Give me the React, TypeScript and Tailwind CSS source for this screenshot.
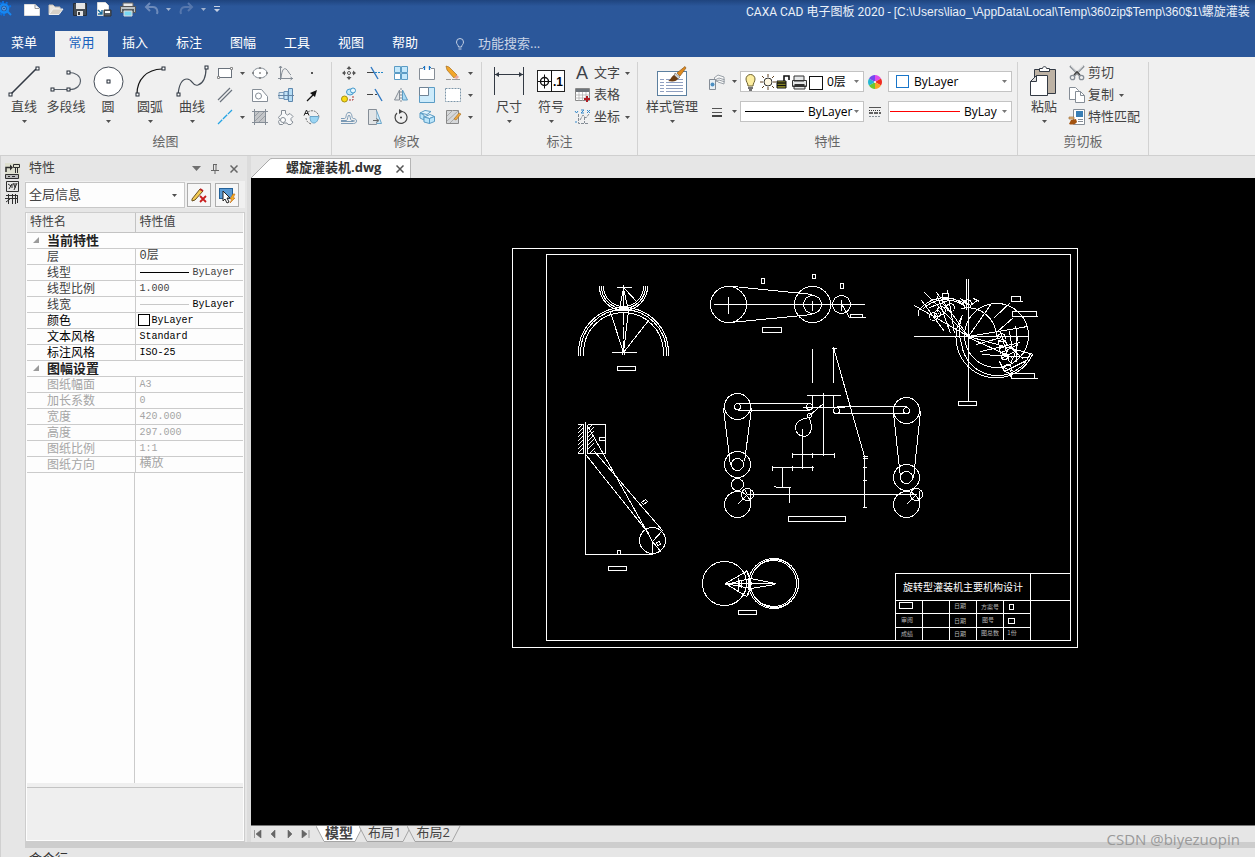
import React from "react";

type Kids = { children?: React.ReactNode };

const SANS = "font-['Open_Sans','Noto_Sans_CJK_SC',sans-serif]";

/* ---------- small building blocks ---------- */

function Caret({ color = "#505050" }: { color?: string }) {
  return (
    <svg width="5" height="3" viewBox="0 0 5 3" className="shrink-0" aria-hidden="true">
      <path d="M0 0h5L2.5 3z" fill={color} />
    </svg>
  );
}

function Icon({ size = 16, children }: Kids & { size?: number }) {
  return (
    <svg
      width={size}
      height={size}
      viewBox={`0 0 ${size} ${size}`}
      fill="none"
      stroke="#858d96"
      strokeWidth="1"
      className="shrink-0 overflow-visible"
      aria-hidden="true"
    >
      {children}
    </svg>
  );
}

function BigButton({ label, icon, arrow = true, wide = false }: { label: string; icon: React.ReactNode; arrow?: boolean; wide?: boolean }) {
  return (
    <button type="button" className={`${wide ? "w-[68px]" : "w-[42px]"} flex shrink-0 flex-col items-center whitespace-nowrap pt-[2px]`}>
      <span className="flex h-[34px] items-center">{icon}</span>
      <span className="h-[18px] text-[13px] leading-[17px]">{label}</span>
      <span className="flex h-[10px] items-center">{arrow && <Caret />}</span>
    </button>
  );
}

function Tool({ label, children }: Kids & { label: string }) {
  return (
    <button type="button" aria-label={label} className="flex h-[22px] w-[26px] items-center justify-center">
      {children}
    </button>
  );
}

function More({ label }: { label: string }) {
  return (
    <button type="button" aria-label={label} className="flex h-[22px] w-[9px] items-center justify-center">
      <Caret />
    </button>
  );
}

function Group({ title, width, children }: Kids & { title: string; width: string }) {
  return (
    <section className={`${width} flex shrink-0 flex-col border-r border-[#d2d2d2]`}>
      <div className="flex h-[66px]">{children}</div>
      <h2 className="h-[24px] pt-[3px] text-center text-[13px] leading-[20px] text-[#666]">{title}</h2>
    </section>
  );
}

function TextTool({ label, icon, arrow }: { label: string; icon: React.ReactNode; arrow?: boolean }) {
  return (
    <button type="button" className="flex h-[22px] items-center whitespace-nowrap text-[13px]">
      {icon}
      <span className="ml-[3px]">{label}</span>
      {arrow && (
        <span className="ml-[5px]">
          <Caret />
        </span>
      )}
    </button>
  );
}

function Node({ x, y }: { x: number; y: number }) {
  return <rect x={x - 1.5} y={y - 1.5} width="3" height="3" fill="#fff" stroke="#222b36" strokeWidth="1" />;
}

/* ---------- large ribbon icons ---------- */

const LineIcon = (
  <Icon size={32}>
    <path d="M3 29L28 4" stroke="#333a44" strokeWidth="1.6" />
    <Node x={2.5} y={29.5} />
    <Node x={29.5} y={3.5} />
  </Icon>
);
const PolylineIcon = (
  <Icon size={32}>
    <path d="M2 24.5H20C27 24.5 30.5 20 30.5 16C30.5 11 26 7.5 18 7.5" stroke="#5a626c" strokeWidth="1.2" />
    <Node x={2.5} y={24.5} />
    <Node x={18.5} y={24.5} />
    <Node x={18.5} y={7.5} />
  </Icon>
);
const CircleIcon = (
  <Icon size={32}>
    <circle cx="16.5" cy="16.5" r="14.5" fill="#fff" stroke="#444c56" />
    <Node x={16.5} y={16.5} />
  </Icon>
);
const ArcIcon = (
  <Icon size={32}>
    <path d="M3 29C3 14 13 4.5 28 4" stroke="#111" strokeWidth="1.2" />
    <Node x={3.5} y={29.5} />
    <Node x={29.5} y={3.5} />
  </Icon>
);
const SplineIcon = (
  <Icon size={32}>
    <path d="M2 30C3 19 6 14 11 14C17 14 16 22 22 20C28 18 30 12 30 3" stroke="#444c56" strokeWidth="1.2" />
    <Node x={2.5} y={29.5} />
    <Node x={30.5} y={2.5} />
  </Icon>
);
const DimensionIcon = (
  <Icon size={32}>
    <path d="M1.5 2v28M30.5 2v28" stroke="#333a44" />
    <path d="M2 9.5h28" stroke="#333a44" />
    <path d="M2 9.5l4-2.5v5zM30 9.5l-4-2.5v5z" fill="#333a44" stroke="none" />
  </Icon>
);
const SymbolIcon = (
  <Icon size={32}>
    <rect x="2.5" y="5.5" width="27" height="21" fill="#fff" stroke="#222" />
    <path d="M16.5 5v22M3 16.5h13M9.5 9.5v14" stroke="#111" />
    <circle cx="9.500" cy="16.500" r="4" stroke="#111" strokeWidth="1.4" />
    <text x="18" y="21" fill="#000" stroke="none" className="font-['Liberation_Sans',sans-serif] text-[12px] font-bold">
      .1
    </text>
  </Icon>
);
const StyleIcon = (
  <Icon size={32}>
    <rect x="1.5" y="6.5" width="29" height="24" fill="#fff" stroke="#5b7f9f" />
    <path d="M4 14.5h4M4 17.5h4M4 20.5h4M4 23.5h4M4 26.5h4M10 14.5h17M10 17.5h17M10 20.5h17M10 23.5h17M10 26.5h17" stroke="#8f9fc0" />
    <path d="M21 8L29 1.500L30 3L24 11z" fill="#e08a1e" stroke="#8a5a20" strokeWidth=".7" />
    <path d="M19 8l5 4l-2 2l-4-3z" fill="#cfd3d6" stroke="#666" strokeWidth=".6" />
    <path d="M18 10l4 3.500c-1 3-5 3.500-10 2.500c3-1 3-4.500 6-6z" fill="#6b3d14" stroke="none" />
  </Icon>
);
const PasteIcon = (
  <Icon size={32}>
    <path d="M6.500 4.500h21v24h-21z" fill="#bdb2a4" stroke="#333a44" />
    <path d="M11.500 6.500v-3h3c0-2.500 4-2.500 4 0h3v3z" fill="#fff" stroke="#333a44" />
    <path d="M8.500 10.500h11v20h-17v-14z" fill="#fff" stroke="#333a44" />
    <path d="M8.500 10.500v6h-6z" fill="#ddd" stroke="#333a44" />
  </Icon>
);

/* ---------- small ribbon icons ---------- */

const drawTools: [string, React.ReactNode][] = [
  ["矩形", <Icon><rect x="1.5" y="3.5" width="13" height="9" fill="#fff" stroke="#6a727c" /><path d="M.5 11.500h2v2h-2zM13.500 2.500h2v2h-2z" fill="#fff" stroke="#888" /></Icon>],
  ["椭圆", <Icon><ellipse cx="8" cy="8" rx="7" ry="5" fill="#fff" /><path d="M7 8h2M7 3h2M7 13h2M0 8h2M14 8h2" stroke="#555" /></Icon>],
  ["公式曲线", <Icon><path d="M2.500 1v14M0 13.500h15M3 13C4 4 6 3 8 4c2 1 3 5 5 6M1 3l1.500-2L4 3M12.500 12l2 1.500l-2 1.500" /></Icon>],
  ["点", <Icon><path d="M7 7h2v2H7z" fill="#555" stroke="none" /></Icon>],
  ["平行线", <Icon><path d="M1 13L13 1M3 15L15 3" stroke="#6a727c" strokeWidth="1.2" /></Icon>],
  ["孔", <Icon><path d="M.5 2.500h9l6 7v5h-15z" fill="#fff" /><circle cx="6.500" cy="9" r="3" /></Icon>],
  ["轴", <Icon><path d="M1 5.500h5v6H1z" fill="#dcecf6" stroke="#7d9cb8" /><path d="M6 4.500h4v8H6z" fill="#c2e3f7" stroke="#6a90b5" /><path d="M10.500 1.500h4v13h-4z" fill="#b5dcf5" stroke="#5d87ad" /><path d="M0 8.500h16" stroke="#6585a5" /></Icon>],
  ["箭头", <Icon><path d="M3 14l6-6" stroke="#111" strokeWidth="1.3" /><path d="M13 3L11 10L6 6z" fill="#111" stroke="none" /></Icon>],
  ["直线段", <Icon><path d="M1 15L15 1" stroke="#25a4e4" strokeWidth="1.3" strokeDasharray="6 1" /></Icon>],
  ["剖面线", <Icon><rect x="2.500" y="2.500" width="11" height="11" fill="#c3c5c8" stroke="#777" /><path d="M0 2.500h16M0 13.500h16M2.500 0v16M13.500 0v16" /><path d="M3 7l4-4M3 12l9-9M7 13l6-6" stroke="#999ea3" /></Icon>],
  ["齿轮", <Icon><path d="M3.500 1.500h4v3l2 1.500l2.500-1.500l3 3l-2 2v2l2 1.500l-2 2.500h-3l-1-1.500H6L4.500 15.500h-3l-1-3l1.500-2l-1.500-2l1.500-2l1.500-1z" fill="#f7f8f9" /><circle cx="5" cy="11" r="2.500" fill="#fff" /></Icon>],
  ["局部放大", <Icon><path d="M4 3a7 7 0 0 1 11 6M2 9a6.500 6.500 0 0 0 6 6" stroke="#666" strokeDasharray="2 1" /><path d="M6 7.500h8.500c0 4-2.500 6.500-4.500 6.500s-4-1-4-6.500z" fill="#9bd5f3" stroke="#6aa5c9" /><path d="M0 6.500L2.500 1L5 6.500M1 4.500h3" stroke="#222" /></Icon>],
];

const editTools: [string, React.ReactNode][] = [
  ["平移", <Icon><path d="M8 2v3M8 11v3M2 8h3M11 8h3" stroke="#555" /><path d="M8 1l2.500 3h-5zM8 15l2.500-3h-5zM1 8l3-2.500v5zM15 8l-3-2.500v5z" fill="#555" stroke="none" /><circle cx="8" cy="8" r="1.500" fill="#fff" stroke="#555" /></Icon>],
  ["裁剪", <Icon><path d="M0 7.500h7" stroke="#444" /><path d="M8 7.500h8" stroke="#2688c9" strokeDasharray="2 1" /><path d="M4 2l7 12" stroke="#2e78c2" strokeWidth="1.4" /></Icon>],
  ["阵列", <Icon><path d="M1.500 1.500h6v6h-6zM8.500 1.500h6v6h-6zM8.500 8.500h6v6h-6z" fill="#c4e8fb" stroke="#5b9cc5" /><path d="M1.500 8.500h6v6h-6z" fill="#fff" stroke="#5b9cc5" /></Icon>],
  ["打断", <Icon><path d="M4 3.500H.5v11h15v-11H12" fill="#fff" /><path d="M4 2.500h2M10 2.500h2" stroke="#1672c4" /><path d="M5.500 1v4M10.500 1v4" stroke="#1672c4" strokeWidth="1.3" /></Icon>],
  ["删除", <Icon><path d="M1 1l3 1l8 8l-3 3l-7-8z" fill="#f2a62a" stroke="#a86f1b" strokeWidth=".7" /><path d="M9 13l3-3l2 2l-2 2z" fill="#e8a79c" stroke="none" /><path d="M1 14.500h5M7 14.500h8" stroke="#999" /></Icon>],
  ["平移复制", <Icon><circle cx="3.500" cy="12" r="3" fill="#fadb16" stroke="#a59013" /><ellipse cx="9" cy="5" rx="3.500" ry="3" fill="#bfe7fb" stroke="#4398cb" /><circle cx="12" cy="3.500" r="2.500" fill="#e6f7ff" stroke="#4398cb" /><path d="M8 13h4V9" stroke="#ad3535" strokeDasharray="2 1" /></Icon>],
  ["延伸", <Icon><path d="M0 7.500h6M8 7.500h2" stroke="#444" /><path d="M8 2l7 12" stroke="#2e78c2" strokeWidth="1.4" /></Icon>],
  ["镜像", <Icon><path d="M6.500 3v10h-5z" fill="#e1e4e6" /><path d="M9.500 3v10h5z" fill="#a9daf5" stroke="#5c9bc2" /><path d="M8 1v14" strokeDasharray="2 1" /></Icon>],
  ["缩放", <Icon><path d="M.5 .5h15v15H.5z" fill="#cdebfb" stroke="#5b9cc5" /><path d="M.5 .5h9v8h-9z" fill="#fff" stroke="#708496" /></Icon>],
  ["选择", <Icon><path d="M.5 1.500h15v13H.5z" fill="#fff" stroke="#7d96a9" strokeDasharray="2 1" /></Icon>],
  ["等距线", <Icon><path d="M0 9.500h3.500C6 9.500 4 3.500 8 3.500s2 6 4.500 6c4 0 4 5 0 5H0M0 12.500h12c2 0 2-1 .5-1h-2C9 11 9.500 6 8 6s-1 5-2.500 5.500H0" stroke="#7b9ab5" /></Icon>],
  ["拉伸", <Icon><path d="M1.500 .5h8v15h-8z" fill="#e1e4e6" /><path d="M9.500 1.500l5 13h-5" fill="#cdebfb" stroke="#6aa5c9" /><path d="M6 11.500h5M9.500 9.500l2.500 2l-2.500 2" stroke="#666" /></Icon>],
  ["旋转", <Icon><path d="M9 2.500A6 6 0 1 1 4 4" stroke="#444" strokeWidth="1.2" /><path d="M6 0l4 2.500L6 5z" fill="#444" stroke="none" /><circle cx="8" cy="8.500" r="1" fill="#333" stroke="none" /></Icon>],
  ["分解", <Icon><path d="M1 4l5-2.500l6 1l-4 3z" fill="#e2f4fd" stroke="#5b9cc5" /><path d="M1 4l4 2v5l-4-2z" fill="#bbe5fa" stroke="#5b9cc5" /><path d="M5 8l6-2.500l4.500 2l-5 2z" fill="#e2f4fd" stroke="#5b9cc5" /><path d="M5 8l5.500 1.500v5L5 13zM10.500 9.500l5-2v5l-5 2z" fill="#bbe5fa" stroke="#5b9cc5" /></Icon>],
  ["编辑", <Icon><path d="M1.500 1.500h12v13h-12z" fill="#d5d7d9" stroke="#888" /><path d="M2 7l6-6M2 12l11-10M5 14l9-9" stroke="#aaa" /><path d="M9 10l5-6l2 1l-5 6z" fill="#f0a83f" stroke="#a46b1d" strokeWidth=".6" /></Icon>],
];

const LetterIcon = (
  <Icon>
    <text x="1" y="14" fill="#3b424b" stroke="none" className="font-['Liberation_Sans',sans-serif] text-[18px]">A</text>
  </Icon>
);
const TableIcon = (
  <Icon>
    <path d="M.5 1.500h14v12H.5z" fill="#fff" stroke="#888" />
    <path d="M1 2h13v3H1z" fill="#6e747a" stroke="none" />
    <path d="M4 5v9M7.500 5v9M11 5v9M0 8h15M0 11h15" stroke="#aaa" strokeWidth=".7" />
    <path d="M12 9v6M9 12h6" stroke="#b01c24" strokeWidth="2" />
  </Icon>
);
const CoordIcon = (
  <Icon>
    <path d="M3.500 5v9.500h10M5 11l3-5l3 3l3-4M9.500 8v6" strokeDasharray="3 1" />
    <path d="M0 2l1.500 2L3 2M6 1h3l-3 3h3M12 1l3 3M15 1l-3 3M0 13h2" stroke="#3489cb" />
  </Icon>
);
const ScissorsIcon = (
  <Icon>
    <path d="M1 1l10 10M15 1L5 11" stroke="#8b9197" strokeWidth="2" />
    <path d="M2 1l10 11M14 1L4 12" stroke="#fff" strokeWidth=".7" />
    <circle cx="3.500" cy="12.500" r="2.200" strokeWidth="1.3" />
    <circle cx="12.500" cy="12.500" r="2.200" strokeWidth="1.3" />
    <path d="M5 10l3-3l3 3" stroke="#444" strokeWidth="1.6" />
  </Icon>
);
const CopyIcon = (
  <Icon>
    <path d="M.5 .5h6l3 3v9h-9z" fill="#fff" />
    <path d="M6.500 4.500h5l4 4v7h-9z" fill="#fff" />
    <path d="M11.500 4.500v4h4" />
  </Icon>
);
const MatchIcon = (
  <Icon>
    <path d="M4.500 .5h11v15h-11z" fill="#fff" />
    <path d="M7 2h7v6H7z" fill="#387eb5" stroke="none" />
    <path d="M9 10.500h5M9 12.500h5" />
    <path d="M0 8h5v2H0z" fill="#e5ba80" stroke="#946021" strokeWidth=".6" />
    <path d="M2 11l5-1l1 3c-2 3-6 3-8 2z" fill="#a35310" stroke="none" />
  </Icon>
);
const LayersIcon = (
  <Icon>
    <path d="M5 4l4-3l6 2v7l-6-2zM6 6l4-2l6 2M6 8l4-2l6 2" fill="#f8f8f8" stroke="#9aa1a8" />
    <path d="M.5 5.500h6v10h-6z" fill="#e9f0f5" />
    <circle cx="3.500" cy="10.500" r="2" fill="#4c8fc2" stroke="none" />
  </Icon>
);
const WidthIcon = (
  <Icon>
    <path d="M3 4.500h10M3 8.500h10" stroke="#555" />
    <path d="M3 12h10" stroke="#444" strokeWidth="2" />
  </Icon>
);
const LineTypeIcon = (
  <Icon size={14}>
    <path d="M1 2.500h12" stroke="#555" />
    <path d="M1 5.500h12" stroke="#333" strokeDasharray="1 1" />
    <path d="M1 8h12" stroke="#333" strokeWidth="1.4" strokeDasharray="4 1" />
    <path d="M1 11.500h12" strokeDasharray="2 1" />
  </Icon>
);
const WheelIcon = (
  <Icon size={14}>
    <g stroke="none">
      <path d="M7 7L7 0A7 7 0 0 1 13 3.500z" fill="#e14be8" />
      <path d="M7 7L13 3.500A7 7 0 0 1 13 10.500z" fill="#f12c22" />
      <path d="M7 7L13 10.500A7 7 0 0 1 7 14z" fill="#f6a821" />
      <path d="M7 7L7 14A7 7 0 0 1 1 10.500z" fill="#69c92e" />
      <path d="M7 7L1 10.500A7 7 0 0 1 1 3.500z" fill="#24b6d2" />
      <path d="M7 7L1 3.500A7 7 0 0 1 7 0z" fill="#7348ef" />
    </g>
    <circle cx="7" cy="7" r="1" fill="#fff" stroke="none" />
  </Icon>
);

/* ---------- header ---------- */

function QuickAccess() {
  const item = "flex h-[18px] w-[24px] items-center justify-center";
  const small = "flex h-[18px] items-center justify-center";
  return (
    <div className="flex shrink-0 basis-[746px] items-start">
      <span className="flex h-[18px] w-[20px] items-center">
        <svg width="12" height="16" viewBox="0 0 12 16" fill="none" aria-hidden="true">
          <path d="M0 2l2 1M3 0v3M7 1l-1 3M11 5l-3 1M0 12l2 2M4 12v3" stroke="#0f6fdc" strokeWidth="2" />
          <circle cx="4" cy="7.500" r="4" stroke="#1687f2" strokeWidth="2.5" />
          <path d="M7 10l4 4" stroke="#1687f2" strokeWidth="2" />
          <circle cx="4" cy="7.500" r="1.500" stroke="#5ab0ff" />
        </svg>
      </span>
      <button type="button" aria-label="新建" className={item}>
        <Icon><path d="M.5 3.500H11l4.500 4v7H.5z" fill="#fff" stroke="#ddd" /><path d="M11 3.500v4h4" stroke="#999" /></Icon>
      </button>
      <button type="button" aria-label="打开" className={item}>
        <Icon><path d="M1 13V4h4l2 2h5v3" fill="#e9e5df" stroke="#c7c0b6" /><path d="M1 13.500L5 8h10l-4 5.500z" fill="#d6d0c7" stroke="#eee" /></Icon>
      </button>
      <button type="button" aria-label="保存" className={item}>
        <Icon><path d="M1.500 2.500h13v12h-13z" fill="#444b53" stroke="#252d38" /><path d="M4 2h9v6H4zM5 10h6v5H5z" fill="#e4e4e4" stroke="none" /><path d="M6 11h2v3H6z" fill="#333" stroke="none" /></Icon>
      </button>
      <button type="button" aria-label="另存为" className={item}>
        <Icon><path d="M1.500 1.500h8l3 3v10h-11z" fill="#fff" stroke="#ddd" /><path d="M2 9l4 4M6 9v4H2" stroke="#18699b" strokeWidth="1.4" /><path d="M8 9h7v6H8z" fill="#58606a" stroke="#333" /><path d="M9 10h5v2H9z" fill="#fff" stroke="none" /></Icon>
      </button>
      <button type="button" aria-label="打印" className={item}>
        <Icon><path d="M3 2h10v4H3z" fill="#e9e9e9" stroke="#666" /><path d="M.5 5.500h15v6H.5z" fill="#bbc0c3" stroke="#555" /><path d="M2 8h12v4H2z" fill="#555d62" stroke="none" /><path d="M4 10h8v5H4z" fill="#7ad8f1" stroke="#ddd" /></Icon>
      </button>
      <button type="button" aria-label="撤销" className={`${small} w-[24px]`}>
        <Icon><path d="M3 6h6c4 0 5 4 4 7M6 2L2 6l4 4" stroke="#6d8bbb" strokeWidth="2" /></Icon>
      </button>
      <button type="button" aria-label="撤销列表" className={`${small} w-[9px]`}><Caret color="#a1b2cf" /></button>
      <button type="button" aria-label="重做" className={`${small} w-[25px]`}>
        <Icon><path d="M13 6H7c-4 0-5 4-4 7M10 2l4 4l-4 4" stroke="#5677ad" strokeWidth="2" /></Icon>
      </button>
      <button type="button" aria-label="重做列表" className={`${small} w-[10px]`}><Caret color="#a1b2cf" /></button>
      <button type="button" aria-label="自定义快速启动" className={`${small} w-[18px]`}>
        <svg width="6" height="8" viewBox="0 0 6 8" aria-hidden="true"><path d="M0 1h6v1H0zM0 4h6L3 7z" fill="#c7d2e5" /></svg>
      </button>
    </div>
  );
}

function Header() {
  const tabs = ["插入", "标注", "图幅", "工具", "视图", "帮助"];
  return (
    <header className="flex h-[57px] shrink-0 flex-col bg-[#2b579a] text-white">
      <div className="flex h-[31px] bg-linear-to-b from-[#1f447e] to-[#2b579a] to-20%">
        <QuickAccess />
        <h1 className="whitespace-pre pt-[3px] font-['Roboto','Noto_Sans_CJK_SC',sans-serif] text-[12px] leading-[18px] text-[#eaf0f8]">
          {"CAXA CAD 电子图板 2020 - "}
          <span className="font-['Liberation_Sans','Noto_Sans_CJK_SC',sans-serif]">{"[C:\\Users\\liao_\\AppData\\Local\\Temp\\360zip$Temp\\360$1\\螺旋灌装"}</span>
        </h1>
      </div>
      <nav className="flex h-[26px] text-[13px]">
        <button type="button" className="mr-[7px] w-12 pb-[2px]">菜单</button>
        <button type="button" className="w-[53px] bg-[#f0f0f0] pb-[2px] text-[#1a62bd]">常用</button>
        {tabs.map((t) => (
          <button type="button" key={t} className="w-[54px] pb-[2px]">{t}</button>
        ))}
        <label className="ml-[22px] flex items-center">
          <svg width="12" height="14" viewBox="0 0 12 14" fill="none" stroke="#c4d0e4" aria-hidden="true">
            <path d="M4.500 10C4.500 8 2.500 7.500 2.500 5a3.500 3.500 0 0 1 7 0c0 2.500-2 3-2 5zM4.500 12h3" />
          </svg>
          <input type="text" aria-label="功能搜索" placeholder="功能搜索..." className="ml-3 h-[24px] w-[110px] bg-transparent pb-[2px] text-[13px] leading-[22px] outline-none placeholder:text-[#c9d4e6]" />
        </label>
      </nav>
    </header>
  );
}

/* ---------- ribbon ---------- */

const comboBox = "flex h-[21px] w-[124px] items-center border border-[#c3c3c3] bg-white pr-1 text-[12px] text-black";
const comboSelect = "min-w-0 flex-1 appearance-none bg-transparent outline-none";

function Ribbon() {
  return (
    <div className="flex h-[99px] shrink-0 overflow-hidden border-b border-[#cfcfcf] bg-[#f0f0f0] pt-[5px] text-[#444]">
      <Group title="绘图" width="w-[332px]">
        <div className="flex pl-[3px]">
          <BigButton label="直线" icon={LineIcon} />
          <BigButton label="多段线" icon={PolylineIcon} arrow={false} />
          <BigButton label="圆" icon={CircleIcon} />
          <BigButton label="圆弧" icon={ArcIcon} />
          <BigButton label="曲线" icon={SplineIcon} />
        </div>
        <div className="-ml-px grid grid-cols-[26px_9px_26px_26px_26px] content-start">
          {drawTools.map(([name, icon], i) => (
            <React.Fragment key={name}>
              <Tool label={name}>{icon}</Tool>
              {i === 0 && <More label="更多矩形" />}
              {i === 4 && <span />}
              {i === 8 && <More label="更多直线" />}
            </React.Fragment>
          ))}
        </div>
      </Group>

      <Group title="修改" width="w-[150px]">
        <div className="grid grid-cols-[26px_26px_26px_26px_26px_9px] content-start pl-1">
          {editTools.map(([name, icon], i) => (
            <React.Fragment key={name}>
              <Tool label={name}>{icon}</Tool>
              {i % 5 === 4 && <More label={`更多${name}`} />}
            </React.Fragment>
          ))}
        </div>
      </Group>

      <Group title="标注" width="w-[156px]">
        <div className="flex pl-[6px]">
          <BigButton label="尺寸" icon={DimensionIcon} />
          <BigButton label="符号" icon={SymbolIcon} />
        </div>
        <div className="ml-[3px] flex flex-col">
          <TextTool label="文字" icon={LetterIcon} arrow />
          <TextTool label="表格" icon={TableIcon} />
          <TextTool label="坐标" icon={CoordIcon} arrow />
        </div>
      </Group>

      <Group title="特性" width="w-[380px]">
        <BigButton label="样式管理" icon={StyleIcon} wide />
        <div className="flex flex-col gap-[9px] pt-[9px]">
          <div className="flex h-[21px] items-center">
            <button type="button" aria-label="图层" className="flex w-[21px] justify-center">{LayersIcon}</button>
            <span className="flex w-[13px] justify-end pr-[3px]"><Caret /></span>
            <div className={comboBox}>
              <svg width="86" height="18" viewBox="0 0 86 18" fill="none" className="shrink-0" aria-hidden="true">
                <path d="M7 13C7 10 5 9 5 6a4.500 4.500 0 0 1 9 0c0 3-2 4-2 7z" fill="#fdeea0" stroke="#6d6130" />
                <path d="M7 15h5M8 17h3" stroke="#444" strokeWidth="1.5" />
                <circle cx="27" cy="9" r="4" fill="#fff7e0" stroke="#333" />
                <path d="M27 1v3M27 14v3M19 9h3M32 9h3M21 3l2 2M31 13l2 2M33 3l-2 2M23 13l-2 2" stroke="#604020" />
                <path d="M36 8h9v7h-9z" fill="#a9a52a" stroke="#111" />
                <path d="M36 10h9M36 12.500h9M43 8V3h5v4" stroke="#111" strokeWidth="1.6" />
                <path d="M53 3h10v5H53zM51.500 7.500h14v6h-14zM53 12h11v4H53z" fill="#e5e7e8" stroke="#333" />
                <path d="M54 12h9" stroke="#333" strokeWidth="2" />
                <rect x="68.500" y="3.500" width="13" height="13" fill="#fff" stroke="#111" />
              </svg>
              <select aria-label="当前图层" className={comboSelect}><option>0层</option></select>
              <Caret color="#777" />
            </div>
            <button type="button" aria-label="颜色" className="flex w-[24px] justify-center pr-[2px]">{WheelIcon}</button>
            <div className={comboBox}>
              <span className="ml-[7px] mr-[5px] h-[13px] w-[13px] shrink-0 border border-[#1976c9] bg-white" />
              <select aria-label="当前颜色" className={comboSelect}><option>ByLayer</option></select>
              <Caret color="#777" />
            </div>
          </div>
          <div className="flex h-[21px] items-center">
            <button type="button" aria-label="线宽" className="flex w-[21px] justify-center">{WidthIcon}</button>
            <span className="flex w-[13px] justify-end pr-[3px]"><Caret /></span>
            <div className={comboBox}>
              <span className="ml-1 mr-1 h-px w-[59px] shrink-0 bg-black" />
              <select aria-label="当前线宽" className={comboSelect}><option>ByLayer</option></select>
              <Caret color="#777" />
            </div>
            <button type="button" aria-label="线型" className="flex w-[24px] justify-center pr-[2px]">{LineTypeIcon}</button>
            <div className={comboBox}>
              <svg width="70" height="3" viewBox="0 0 70 3" className="ml-px mr-1 shrink-0" aria-hidden="true">
                <rect y="1" width="70" height="1" fill="red" />
              </svg>
              <select aria-label="当前线型" className={`${comboSelect} mr-[5px]`}><option>ByLayer</option></select>
              <Caret color="#777" />
            </div>
          </div>
        </div>
      </Group>

      <Group title="剪切板" width="w-[131px]">
        <div className="flex pl-[5px]">
          <BigButton label="粘贴" icon={PasteIcon} />
        </div>
        <div className="ml-1 flex flex-col">
          <TextTool label="剪切" icon={ScissorsIcon} />
          <TextTool label="复制" icon={CopyIcon} arrow />
          <TextTool label="特性匹配" icon={MatchIcon} />
        </div>
      </Group>
    </div>
  );
}

/* ---------- property panel ---------- */

type Tone = "grey" | "black" | "dim";
const tones: Record<Tone, string> = { grey: "text-[#404040]", black: "text-black", dim: "text-[#a5a5a5]" };

const current: [string, React.ReactNode, Tone][] = [
  ["层", "0层", "grey"],
  ["线型", <span className="flex items-center"><span className="mr-1 h-px w-[49px] bg-black" />ByLayer</span>, "grey"],
  ["线型比例", "1.000", "grey"],
  ["线宽", <span className="flex items-center text-black"><span className="mr-1 h-px w-[49px] bg-[#c8c8c8]" />ByLayer</span>, "grey"],
  ["颜色", <span className="-ml-[2px] flex items-center"><span className="mr-[2px] h-[12px] w-[12px] border border-black bg-white" />ByLayer</span>, "black"],
  ["文本风格", "Standard", "black"],
  ["标注风格", "ISO-25", "black"],
];
const sheet: [string, React.ReactNode, Tone][] = [
  ["图纸幅面", "A3", "dim"],
  ["加长系数", "0", "dim"],
  ["宽度", "420.000", "dim"],
  ["高度", "297.000", "dim"],
  ["图纸比例", "1:1", "dim"],
  ["图纸方向", "横放", "dim"],
];
const cjkValues = ["0层", "横放"];

function CategoryRow({ name }: { name: string }) {
  return (
    <tr className="h-4 border-b border-[#cbcbcb]">
      <th colSpan={2} scope="rowgroup" className="p-0 text-left text-[13px] font-bold leading-[15px] text-[#222]">
        <span className="flex items-center pl-[6px]">
          <svg width="6" height="6" viewBox="0 0 6 6" className="mr-2" aria-hidden="true"><path d="M6 0v6H0z" fill="#9b9b9b" /></svg>
          {name}
        </span>
      </th>
    </tr>
  );
}

function PropRows({ rows }: { rows: [string, React.ReactNode, Tone][] }) {
  return (
    <>
      {rows.map(([k, v, tone]) => {
        const size = typeof v === "string" && cjkValues.includes(v) ? "text-[12px]" : "text-[10px]";
        return (
          <tr key={k} className={`h-4 border-b border-[#cbcbcb] ${tones[tone]}`}>
            <th scope="row" className="border-r border-[#cbcbcb] p-0 pl-5 text-left text-[12px] font-normal leading-[15px]">{k}</th>
            <td className={`whitespace-nowrap p-0 pl-1 font-['Liberation_Mono','Noto_Sans_CJK_SC',monospace] leading-[15px] ${size}`}>{v}</td>
          </tr>
        );
      })}
    </>
  );
}

function PropertyPanel() {
  const toolButton = "flex h-[24px] w-[24px] items-center justify-center border border-[#adadad] bg-[#f7f7f7]";
  return (
    <aside className="flex w-[220px] shrink-0 flex-col">
      <div className="flex h-[25px] items-center pl-1 pr-1 text-[#444]">
        <h2 className="pb-[2px] text-[13px]">特性</h2>
        <div className="ml-auto flex gap-[6px]">
          <button type="button" aria-label="菜单" className="flex h-4 w-[14px] items-center justify-center"><svg width="9" height="5" viewBox="0 0 9 5" aria-hidden="true"><path d="M0 0h9L4.500 5z" fill="#707070" /></svg></button>
          <button type="button" aria-label="固定" className="flex h-4 w-[12px] items-center justify-center"><svg width="8" height="10" viewBox="0 0 8 10" fill="none" stroke="#666" aria-hidden="true"><path d="M2.500 0v6M5 0v6M2 .5h4M0 6.500h8M4 7v3" /></svg></button>
          <button type="button" aria-label="关闭" className="flex h-4 w-[14px] items-center justify-center"><svg width="8" height="8" viewBox="0 0 8 8" stroke="#666" strokeWidth="1.5" aria-hidden="true"><path d="M.5 .5l7 7M7.500 .5l-7 7" /></svg></button>
        </div>
      </div>
      <div className="flex items-center bg-[#f0f0f0] pt-px">
        <div className="flex h-[26px] w-[160px] items-center border border-[#c8c8c8] bg-[#fdfdfd] pr-[7px]">
          <select aria-label="选择对象" className="min-w-0 flex-1 appearance-none bg-transparent pb-px pl-[3px] text-[13px] text-[#444] outline-none"><option>全局信息</option></select>
          <Caret />
        </div>
        <button type="button" aria-label="取消选择" className={`${toolButton} ml-[2px]`}>
          <Icon><path d="M1 12L9 2l3 2l-8 9l-3 1z" fill="#f3ca52" stroke="#695020" /><path d="M9 2l3 2" stroke="#b22" strokeWidth="2" /><path d="M9 9l6 6M15 9l-6 6" stroke="#c81e1e" strokeWidth="1.8" /></Icon>
        </button>
        <button type="button" aria-label="快速选择" className={`${toolButton} ml-1`}>
          <Icon><rect x=".5" y="1.5" width="13" height="10" fill="#5a9ad4" stroke="#236199" /><path d="M4 4l7 7l-3 0l2 4l-2 1l-2-4l-2 2z" fill="#fff" stroke="#222" /><path d="M14 7l-3 5h2l-2 4l5-5h-2l2-4z" fill="#f8b222" stroke="#c26913" strokeWidth=".6" /></Icon>
        </button>
      </div>
      <div className="mt-1 flex min-h-0 flex-1 flex-col border border-[#cdcdcd] bg-[#fdfdfd] px-px pb-px">
        <table className="w-full table-fixed border-collapse">
          <colgroup><col className="w-1/2" /><col /></colgroup>
          <thead>
            <tr className="h-[19px] border-b border-[#c3c3c3] bg-[#f0f0f0] text-left text-[12px] leading-[18px] text-[#404040]">
              <th scope="col" className="border-r border-[#c3c3c3] p-0 pl-[3px] font-normal">特性名</th>
              <th scope="col" className="p-0 pl-1 font-normal">特性值</th>
            </tr>
          </thead>
          <tbody>
            <CategoryRow name="当前特性" />
            <PropRows rows={current} />
            <CategoryRow name="图幅设置" />
            <PropRows rows={sheet} />
          </tbody>
        </table>
        <div className="flex flex-1"><div className="w-1/2 border-r border-[#cbcbcb]" /></div>
        <div className="h-[57px] shrink-0 bg-[#efefef] pt-1"><div className="border-t border-[#c3c3c3]" /></div>
      </div>
    </aside>
  );
}

function SideStrip() {
  return (
    <div className="w-[25px] shrink-0 border-l border-[#d0d0d0] pl-1 pt-[7px]">
      <svg width="15" height="42" viewBox="0 0 15 42" fill="none" stroke="#2e2e2e" aria-label="工具箱">
        <path d="M0 0h15v16H0z" fill="#dedfcf" stroke="none" />
        <path d="M1 9V4.500h5" strokeWidth="1.5" />
        <path d="M5 1.500l3 3l-3 3z" fill="#2e2e2e" stroke="none" />
        <path d="M8.500 1.500h6v3h-6zM10.500 4v6M12.500 4v6" />
        <path d="M.5 11.500h13v4H.5z" fill="#bbb" />
        <path d="M3 13.500h2M7 13.500h3" />
        <path d="M1.500 18.500h12v10h-12zM3 21l3 2M4 26l3-5v4M8 20l2 4M10 20v5M12 20l-3 7" />
        <path d="M1 32.500h4M3.500 31v10M0 35.500h13M7.500 31v10M10.500 31v10M5 32.500h8M12.500 32v8M1 39l4-3" />
      </svg>
    </div>
  );
}

/* ---------- CAD drawing ---------- */

function Circles({ list }: { list: [number, number, number][] }) {
  return <>{list.map(([x, y, r], i) => <circle key={i} cx={x} cy={y} r={r} />)}</>;
}
function Boxes({ list }: { list: [number, number, number, number][] }) {
  return <>{list.map(([x, y, w, h], i) => <rect key={i} x={x} y={y} width={w} height={h} />)}</>;
}

function Drawing() {
  return (
    <svg viewBox="251 178 1004 647" className="h-full w-full" role="img" aria-label="旋转型灌装机主要机构设计">
      <g transform="translate(.5 .5)" fill="none" stroke="#fff" strokeWidth="1" shapeRendering="crispEdges">
        <Boxes list={[[512, 248, 565, 399], [546, 254, 524, 386]]} />

        {/* title block */}
        <path d="M895 640V573H1070M895 600H1070M895 613H1030M895 627H1030M922 600V640M949 600V640M976 600V640M1003 600V640M1030 573V640" />
        <Boxes list={[[899, 602, 13, 6], [1009, 604, 4, 5], [1008, 618, 6, 5]]} />

        {/* gear pair */}
        <path d="M599 285v1a24 24 0 0 0 48 0v-1M601 285v1a22 22 0 0 0 44 0v-1M603 285v1a20 20 0 0 0 40 0v-1" />
        <path d="M578 355v-3a45 45 0 0 1 90 0v3M580 355v-3a43 43 0 0 1 86 0v3M583 355v-3a40 40 0 0 1 80 0v3" />
        <path d="M616 287h15M623 284v22M611 352h25M623 352L610 312M623 352L648 320M623 352L628 310M623 288L619 308M623 288L628 310M624 288L637 302M621 308h6M620 307h8M622 354v-4M624 354v-4" />
        <path d="M623 352V308" strokeDasharray="12 2" />
        <Boxes list={[[617, 366, 18, 4]]} />

        {/* belt drive */}
        <Circles list={[[728, 304, 18], [812, 304, 18], [812, 304, 9], [841, 304, 9]]} />
        <path d="M713 304H864M728 296v17M812 300v10M841 299v11M733 286L812 294M730 322L812 314M842 305L849 317H865" />
        <Boxes list={[[761, 278, 3, 5], [812, 274, 3, 4], [840, 283, 3, 5], [762, 327, 19, 5], [850, 314, 12, 3]]} />

        {/* main transmission */}
        <Circles list={[[737, 406, 13], [737, 406, 3], [906, 410, 13], [906, 410, 3], [809, 406, 3], [836, 410, 3], [737, 464, 13], [737, 464, 6], [737, 484, 6], [737, 504, 13], [747, 494, 6], [906, 477, 13], [906, 477, 6], [906, 504, 13], [916, 494, 6], [809, 415, 2]]} />
        <path d="M737 403H809M737 410H809M836 406H906M836 413H906" />
        <path d="M723 408L730 465M751 408L744 461M893 413L900 477M920 411L913 478" />
        <path d="M747 494H916M737 504L747 494L744 489M750 489V506M906 504L916 494M919 490V506" />
        <path d="M812 348V382M833 348V382M812 395V407M833 395V407M806 395H840M802 407H844M823 392V455M809 415L823 403" />
        <path d="M809 417L811 426C811 440 795 438 795 427C795 420 802 418 809 417" />
        <path d="M802 428V468M792 454H834M792 452v5M812 452v5M834 452v5M772 467H813M772 465v5M792 465v5M812 465v5M782 466V487M774 486L777 487H790M789 486V502" />
        <path d="M831 348h5M833 347L864 456V507M862 456h5M862 458h5M862 467h4M862 480h4M862 507h4" />
        <Boxes list={[[788, 516, 57, 5]]} />

        {/* slider crank */}
        <path d="M585 421V554H652V541M577 424H583V453H577M587 424H605V453H586M587 424V453" />
        <path d="M577 429l5-5M577 433l6-6M577 437l6-6M577 441l6-6M577 445l6-6M577 449l6-6M577 453l6-6M587 429l5-5M587 433l6-6M587 437l6-6M587 441l6-6M587 445l6-6M587 449l6-6M589 453l5-5" />
        <path d="M588 427L652 541M594 451L662 530M586 455L649 534M652 541L662 530M652 541L661 552M641 502L645 499L647 501L643 504ZM656 542L659 541L660 544L657 545Z" />
        <Circles list={[[652, 540, 13]]} />
        <Boxes list={[[599, 437, 6, 3], [617, 550, 3, 4], [608, 566, 18, 4]]} />

        {/* external gear mesh */}
        <Circles list={[[724, 583, 22], [773, 583, 25], [773, 583, 23], [774, 583, 24]]} />
        <path d="M725 583L746 571M725 583L746 596M725 583H775M725 584L750 578L775 583M725 583L750 588L775 584M738 577V590M741 579V587M746 570L749 578V589L746 597M748 578V589M750 577V590M747 571L751 583L747 596" />
        <Boxes list={[[739, 580, 2, 5], [738, 610, 18, 4]]} />

        {/* cam assembly */}
        <Circles list={[[996, 335, 32], [933, 316, 4], [941, 310, 4], [937, 313, 3], [950, 307, 4], [967, 303, 4], [1001, 337, 4], [1002, 343, 4], [1003, 350, 4], [1004, 356, 3], [1007, 368, 4]]} />
        <path d="M913 336H1028M968 278V400M966 278V309" />
        <path d="M961 318A36 36 0 0 0 961 343A36 36 0 0 0 1030 353M962 315A40 40 0 0 0 956 343A40 40 0 0 0 1032 354M961 308A29 29 0 0 1 996 336" />
        <path d="M918 315v-5C925 302 935 297 945 297C954 297 962 302 966 308M922 309C932 298 950 296 963 305" />
        <path d="M968 336L914 305M968 336L924 292M968 336L936 292M968 336L991 303M947 290L954 333M921 300L944 331M937 296L950 333M960 298L970 305L978 299M942 303L953 315M930 300L942 297M929 307L948 300M958 300L968 304M973 298L979 301" />
        <path d="M968 336L1027 326M968 336L1033 354M968 337L1012 357M980 351L1020 342M982 354L1028 357M976 344L1001 337M994 317L1010 302M997 331L1013 317M1004 341L1023 359M1001 352L1018 344M1001 358L1016 350M1015 326Q1020 345 1010 363M1009 331L1012 350M999 361L1004 371L1026 360M1000 331L1009 362M1003 367L1016 372M1016 327V361" />
        <Boxes list={[[942, 293, 6, 5], [1011, 296, 9, 5], [1012, 311, 24, 5], [1011, 373, 23, 5], [958, 401, 18, 4]]} />
        <path d="M1010 301h12M1012 316h25M1010 378h27M1009 373l3 6" />
      </g>
      <g fill="#fff" textAnchor="middle" className="font-['Noto_Sans_CJK_SC',sans-serif]">
        <text x="963" y="591" className="text-[10px]">旋转型灌装机主要机构设计</text>
        <g fill="#b4b4b4" className="text-[6px]">
          <text x="960" y="608">日期</text>
          <text x="960" y="623">日期</text>
          <text x="960" y="636">日期</text>
          <text x="907" y="622">审阅</text>
          <text x="907" y="636">成绩</text>
          <text x="990" y="609">方案号</text>
          <text x="988" y="622">图号</text>
          <text x="990" y="635">图总数</text>
          <text x="1012" y="635">1份</text>
        </g>
      </g>
    </svg>
  );
}

/* ---------- workspace ---------- */

function DocumentTab() {
  return (
    <div className="flex h-[22px] shrink-0 items-end">
      <svg width="21" height="20" viewBox="0 0 21 20" aria-hidden="true">
        <path d="M0 20L19 1.500L21 .5V20z" fill="#fff" />
        <path d="M0 20L18 2Q19 .5 21 .5" fill="none" stroke="#aaa" />
      </svg>
      <div className="flex h-[20px] items-center whitespace-nowrap border-r border-t border-[#b5b5b5] bg-white pl-[14px] pr-[6px] text-[13px] font-bold text-[#333]">
        <span className="pb-[2px] leading-[17px]">螺旋灌装机.dwg</span>
        <button type="button" aria-label="关闭文档" className="ml-[15px] flex">
          <svg width="8" height="8" viewBox="0 0 8 8" stroke="#555" strokeWidth="1.5" aria-hidden="true"><path d="M.5 .5l7 7M7.500 .5l-7 7" /></svg>
        </button>
      </div>
    </div>
  );
}

function SheetTab({ label, active }: { label: string; active?: boolean }) {
  const text = active ? "bg-white text-[14px] font-bold" : "text-[13px]";
  return (
    <button type="button" className="-mr-[5px] flex h-[17px] items-start whitespace-nowrap text-[#444]">
      <svg width="9" height="17" viewBox="0 0 9 17" aria-hidden="true"><path d="M0 0L8 16.500H9V0z" fill={active ? "#fff" : "#e6e6e6"} /><path d="M0 0L8 15.500H9" fill="none" stroke="#a5a5a5" /></svg>
      <span className={`h-[16px] border-b border-[#a5a5a5] leading-[13px] ${text}`}>{label}</span>
      <svg width="11" height="17" viewBox="0 0 11 17" aria-hidden="true"><path d="M0 0V15.500H2L10 0z" fill={active ? "#fff" : "#e6e6e6"} /><path d="M0 15.500H2L10 0" fill="none" stroke="#a5a5a5" /></svg>
    </button>
  );
}

function SheetBar() {
  const nav: [string, string][] = [
    ["第一页", "M1.500 0v8M8 0v8L3 4z"],
    ["上一页", "M6 0v8L2 4z"],
    ["下一页", "M3 0v8l4-4z"],
    ["最后一页", "M1 0v8l5-4zM8 0v8"],
  ];
  return (
    <div className="flex h-[17px] shrink-0 items-start border-t border-[#777]">
      <div className="flex pl-px">
        {nav.map(([name, d]) => (
          <button type="button" key={name} aria-label={name} className="flex h-4 w-4 items-center pl-px">
            <svg width="9" height="8" viewBox="0 0 9 8" fill="#666" stroke="#666" strokeWidth=".6" aria-hidden="true"><path d={d} /></svg>
          </button>
        ))}
      </div>
      <SheetTab label="模型" active />
      <SheetTab label="布局1" />
      <SheetTab label="布局2" />
    </div>
  );
}

export default function App() {
  return (
    <div className={`relative flex h-screen flex-col overflow-hidden bg-[#e6e6e6] ${SANS}`}>
      <Header />
      <Ribbon />
      <div className="flex min-h-0 flex-1">
        <SideStrip />
        <div className="flex min-w-0 flex-1 flex-col">
          <div className="flex min-h-0 flex-1">
            <PropertyPanel />
            <main className="ml-[2px] flex min-w-0 flex-1 flex-col border-l-4 border-[#dcdcdc]">
              <DocumentTab />
              <div className="min-h-0 flex-1 bg-black"><Drawing /></div>
              <SheetBar />
            </main>
          </div>
          <footer className="h-[15px] shrink-0 overflow-hidden border-t-[6px] border-[#cdcdcd] pl-1 text-[13px] leading-[20px] text-[#333]">
            <p>命令行</p>
          </footer>
        </div>
      </div>
      <p className="pointer-events-none absolute bottom-[8px] right-[15px] text-[15px] leading-[20px] text-[#999]">CSDN @biyezuopin</p>
    </div>
  );
}
